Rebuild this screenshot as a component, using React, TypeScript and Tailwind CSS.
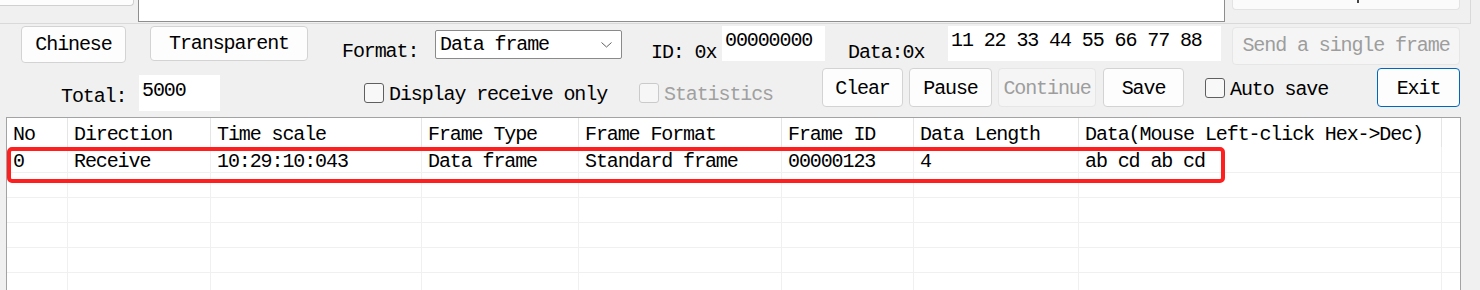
import React from "react";

const cols = [
  { w: 61, h: "No", v: "0" },
  { w: 143, h: "Direction", v: "Receive" },
  { w: 211, h: "Time scale", v: "10:29:10:043" },
  { w: 157, h: "Frame Type", v: "Data frame" },
  { w: 203, h: "Frame Format", v: "Standard frame" },
  { w: 132, h: "Frame ID", v: "00000123" },
  { w: 165, h: "Data Length", v: "4" },
  { w: 363, h: "Data(Mouse Left-click Hex->Dec)", v: "ab cd ab cd" },
];

function Btn({ w, h, children, disabled, primary, extra = "" }: { w: string; h: string; children: React.ReactNode; disabled?: boolean; primary?: boolean; extra?: string }) {
  const base = "flex items-center justify-center rounded-[4px] border whitespace-nowrap ";
  const look = disabled
    ? "bg-[#f5f5f5] border-[#e6e6e6] text-[#9d9d9d]"
    : primary
    ? "bg-[#fdfdfd] border-[#0067c0] text-black"
    : "bg-[#fdfdfd] border-[#d3d3d3] text-black";
  return <div className={`${base}${look} ${w} ${h} ${extra}`}>{children}</div>;
}

function Check({ disabled, extra = "" }: { disabled?: boolean; extra?: string }) {
  return (
    <div
      className={`w-[20px] h-[20px] rounded-[3px] border ${
        disabled ? "border-[#cacaca] bg-[#f6f6f6]" : "border-[#5f5f5f] bg-[#f8f8f8]"
      } ${extra}`}
    />
  );
}

export default function App() {
  return (
    <div className="relative w-[1480px] h-[290px] overflow-hidden bg-[#f0f0f0] text-black font-['Liberation_Mono',monospace] text-[20px] leading-[20px] tracking-[-1.1px]">
      {/* top strip */}
      <div className="flex h-[24px] w-[1471px] border-b border-r border-[#d9d9d9]">
        <div className="w-[134px] h-[6px] bg-[#fdfdfd] border-b border-r border-[#d0d0d0] rounded-br-[4px]" />
        <div className="ml-[4px] w-[1087px] h-[22px] bg-white border-x border-b border-[#8e8e8e]" />
        <div className="ml-[7px] w-[228px] h-[10px] bg-[#fbfbfb] border-x border-b border-[#e3e3e3] rounded-b-[4px] relative overflow-hidden">
          <div className="absolute left-[124px] top-0 w-[2px] h-[3px] bg-[#444]" />
        </div>
      </div>

      {/* row 1 */}
      <div className="flex items-start h-[42px] pl-[21px]">
        <Btn w="w-[105px]" h="h-[37px]" extra="mt-[2px]">Chinese</Btn>
        <Btn w="w-[158px]" h="h-[35px]" extra="mt-[2px] ml-[24px]">Transparent</Btn>
        <div className="ml-[34px] w-[93px] mt-[18px] whitespace-nowrap">Format:</div>
        <div className="mt-[6px] w-[187px] h-[29px] bg-white border border-[#8a8a8a] rounded-[2px] flex items-center pl-[4px] pr-[9px] justify-between">
          <span className="whitespace-nowrap">Data frame</span>
          <svg width="11" height="6" viewBox="0 0 11 6" className="mt-[1px]">
            <path d="M0.5 0.5 L5.5 5 L10.5 0.5" fill="none" stroke="#606060" strokeWidth="1" />
          </svg>
        </div>
        <div className="ml-[29px] w-[71px] mt-[19px] whitespace-nowrap">ID: 0x</div>
        <div className="mt-[2px] w-[103px] h-[35px] bg-white pl-[3px] pt-[5px] whitespace-nowrap">00000000</div>
        <div className="ml-[23px] w-[100px] mt-[19px] whitespace-nowrap">Data:0x</div>
        <div className="mt-[2px] w-[273px] h-[35px] bg-white pl-[3px] pt-[5px] whitespace-nowrap">11 22 33 44 55 66 77 88</div>
        <Btn w="w-[228px]" h="h-[38px]" disabled extra="mt-[3px] ml-[11px]">Send a single frame</Btn>
      </div>

      {/* row 2 */}
      <div className="flex items-start h-[51px] pl-[61px]">
        <div className="w-[78px] mt-[21px] whitespace-nowrap">Total:</div>
        <div className="mt-[9px] w-[81px] h-[36px] bg-white pl-[3px] pt-[6px]">5000</div>
        <Check extra="ml-[144px] mt-[17px]" />
        <div className="ml-[5px] w-[250px] mt-[19px] whitespace-nowrap">Display receive only</div>
        <Check disabled extra="mt-[17px]" />
        <div className="ml-[5px] w-[158px] mt-[19px] whitespace-nowrap text-[#a0a0a0]">Statistics</div>
        <Btn w="w-[81px]" h="h-[39px]" extra="mt-[2px] pt-[2px]">Clear</Btn>
        <Btn w="w-[83px]" h="h-[39px]" extra="mt-[2px] ml-[6px] pt-[2px]">Pause</Btn>
        <Btn w="w-[98px]" h="h-[39px]" disabled extra="mt-[2px] ml-[6px] pt-[2px]">Continue</Btn>
        <Btn w="w-[81px]" h="h-[39px]" extra="mt-[2px] ml-[7px] pt-[2px]">Save</Btn>
        <Check extra="ml-[21px] mt-[12px]" />
        <div className="ml-[5px] w-[142px] mt-[14px] whitespace-nowrap">Auto save</div>
        <Btn w="w-[83px]" h="h-[39px]" primary extra="mt-[2px] ml-[5px] pt-[2px]">Exit</Btn>
      </div>

      {/* table */}
      <div className="ml-[6px] w-[1455px] h-[200px] bg-white border-t border-x border-[#a3a3a3]">
        <div className="flex h-[29px]">
          {cols.map((c) => (
            <div
              key={c.h}
              style={{ width: c.w }}
              className="shrink-0 border-r border-[#e5e5e5] pl-[6px] pt-[7px] whitespace-nowrap overflow-hidden"
            >
              {c.h}
            </div>
          ))}
          <div className="flex-1" />
        </div>
        <div className="flex h-[26px] border-b border-[#f0f0f0]">
          {cols.map((c) => (
            <div
              key={c.h}
              style={{ width: c.w }}
              className="shrink-0 border-r border-[#f0f0f0] pl-[6px] pt-[5px] whitespace-nowrap overflow-hidden"
            >
              {c.v}
            </div>
          ))}
          <div className="flex-1" />
        </div>
        {[0, 1, 2, 3, 4].map((r) => (
          <div key={r} className="flex h-[25px] border-b border-[#f0f0f0]">
            {cols.map((c) => (
              <div key={c.h} style={{ width: c.w }} className="shrink-0 border-r border-[#f0f0f0]" />
            ))}
            <div className="flex-1" />
          </div>
        ))}
      </div>

      {/* highlight */}
      <div className="absolute left-[7px] top-[147px] w-[1218px] h-[36px] border-[4px] border-[#ff1f1f] rounded-[5px]" />
    </div>
  );
}
